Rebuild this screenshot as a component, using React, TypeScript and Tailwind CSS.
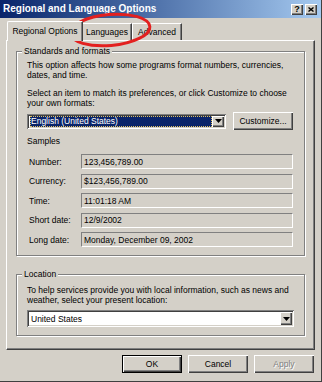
import React from "react";

const raised =
  "shadow-[inset_1px_1px_0_#ffffff,inset_-1px_-1px_0_#404040,inset_-2px_-2px_0_#808080]";
const sunken =
  "shadow-[inset_1px_1px_0_#808080,inset_-1px_-1px_0_#ffffff,inset_2px_2px_0_#404040,inset_-2px_-2px_0_#d4d0c8]";
const etched =
  "border border-[#808080] shadow-[inset_1px_1px_0_#ffffff,1px_1px_0_#ffffff]";

function DownArrow() {
  return (
    <svg width="7" height="4" viewBox="0 0 7 4">
      <path d="M0 0h7L3.5 4z" fill="#000" />
    </svg>
  );
}

function ComboArrow() {
  return (
    <div className={`w-[12px] h-full flex items-center justify-center bg-[#d4d0c8] ${raised}`}>
      <DownArrow />
    </div>
  );
}

function Field({ value }: { value: string }) {
  return (
    <div className="h-[15px] flex items-center pl-[2px] border border-t-[#808080] border-l-[#808080] border-b-white border-r-white">
      {value}
    </div>
  );
}

function Button({
  label,
  primary,
  disabled,
}: {
  label: string;
  primary?: boolean;
  disabled?: boolean;
}) {
  return (
    <div
      className={`w-[60px] h-[18px] flex items-center justify-center bg-[#d4d0c8] ${raised} ${
        primary ? "border border-black" : ""
      } ${disabled ? "text-[#808080] [text-shadow:1px_1px_0_#ffffff]" : "text-black"}`}
    >
      {label}
    </div>
  );
}

const samples: [string, string][] = [
  ["Number:", "123,456,789.00"],
  ["Currency:", "$123,456,789.00"],
  ["Time:", "11:01:18 AM"],
  ["Short date:", "12/9/2002"],
  ["Long date:", "Monday, December 09, 2002"],
];

export default function App() {
  return (
    <div className="relative w-[322px] h-[382px] overflow-hidden bg-[#d4d0c8] text-[8.5px] leading-[10px] text-black font-['Liberation_Sans',Arial,sans-serif] border-r border-b border-[#404040]">
      {/* title bar */}
      <div className="h-[18px] flex items-center justify-between bg-gradient-to-r from-[#0a246a] to-[#a6caf0] pl-[3px] pr-[4px]">
        <span className="text-white font-bold text-[10px]">Regional and Language Options</span>
        <div className="flex gap-[2px]">
          <div className={`w-[12px] h-[11px] flex items-center justify-center bg-[#d4d0c8] ${raised} font-bold text-[9px] leading-none`}>
            ?
          </div>
          <div className={`w-[12px] h-[11px] flex items-center justify-center bg-[#d4d0c8] ${raised}`}>
            <svg width="6" height="5" viewBox="0 0 6 5">
              <path d="M0.5 0.5L5.5 4.5M5.5 0.5L0.5 4.5" stroke="#000" strokeWidth="1.4" />
            </svg>
          </div>
        </div>
      </div>

      {/* tabs */}
      <div className="flex items-end ml-[7px] mt-[3px] h-[19px]">
        <div className="relative z-10 w-[76px] h-[20px] -mb-px flex items-center justify-center pb-[2px] bg-[#d4d0c8] border-l border-t border-white border-r border-r-[#404040] shadow-[inset_-1px_0_0_#808080] rounded-tl-[2px]">
          Regional Options
        </div>
        <div className="w-[49px] h-[17px] flex items-center justify-center border-t border-white border-r border-r-[#404040] shadow-[inset_-1px_0_0_#808080]">
          Languages
        </div>
        <div className="w-[50px] h-[17px] flex items-center justify-center border-l border-t border-white border-r border-r-[#404040] shadow-[inset_-1px_0_0_#808080]">
          Advanced
        </div>
      </div>

      {/* tab panel */}
      <div className="ml-[6px] w-[309px] h-[310px] border-l border-t border-white border-r border-b border-r-[#404040] border-b-[#404040] shadow-[inset_-1px_-1px_0_#808080] px-[9px] pt-[5px]">
        <fieldset className={`${etched} px-[10px] pb-[8px]`}>
          <legend className="-ml-[5px] px-[2px] bg-[#d4d0c8]">Standards and formats</legend>
          <p className="mt-[4px]">
            This option affects how some programs format numbers, currencies,
            <br />
            dates, and time.
          </p>
          <p className="mt-[8px]">
            Select an item to match its preferences, or click Customize to choose
            <br />
            your own formats:
          </p>
          <div className="mt-[4px] flex items-center justify-between">
            <div className={`w-[199px] h-[15px] flex bg-white p-[2px] ${sunken}`}>
              <div className="flex-1 flex items-center pl-[1px]">
                <span className="bg-[#0a246a] text-white h-full w-full flex items-center pl-[1px] outline outline-1 outline-dotted outline-[#e0c060] -outline-offset-1">
                  English (United States)
                </span>
              </div>
              <ComboArrow />
            </div>
            <div className="pr-[1px]">
              <Button label="Customize..." />
            </div>
          </div>
          <p className="mt-[6px]">Samples</p>
          <div className="mt-[8px] grid grid-cols-[54px_1fr] gap-y-[4.5px] items-center pr-[1px]">
            {samples.map(([l, v]) => (
              <React.Fragment key={l}>
                <span className="pl-[2px]">{l}</span>
                <Field value={v} />
              </React.Fragment>
            ))}
          </div>
        </fieldset>

        <fieldset className={`${etched} mt-[13px] px-[10px] pb-[8px]`}>
          <legend className="-ml-[5px] px-[2px] bg-[#d4d0c8]">Location</legend>
          <p className="mt-[6px]">
            To help services provide you with local information, such as news and
            <br />
            weather, select your present location:
          </p>
          <div className={`mt-[5px] h-[17px] flex bg-white p-[2px] ${sunken}`}>
            <div className="flex-1 flex items-center pl-[2px]">United States</div>
            <ComboArrow />
          </div>
        </fieldset>
      </div>

      {/* buttons */}
      <div className="mt-[5px] flex justify-end gap-[6px] pr-[7px]">
        <Button label="OK" primary />
        <Button label="Cancel" />
        <Button label="Apply" disabled />
      </div>

      {/* red annotation ellipse */}
      <svg className="absolute left-0 top-0 pointer-events-none" width="322" height="60">
        <ellipse
          cx="110"
          cy="30"
          rx="40"
          ry="15.5"
          fill="none"
          stroke="#e3201f"
          strokeWidth="3"
          transform="rotate(-5 110 30)"
        />
      </svg>
    </div>
  );
}
